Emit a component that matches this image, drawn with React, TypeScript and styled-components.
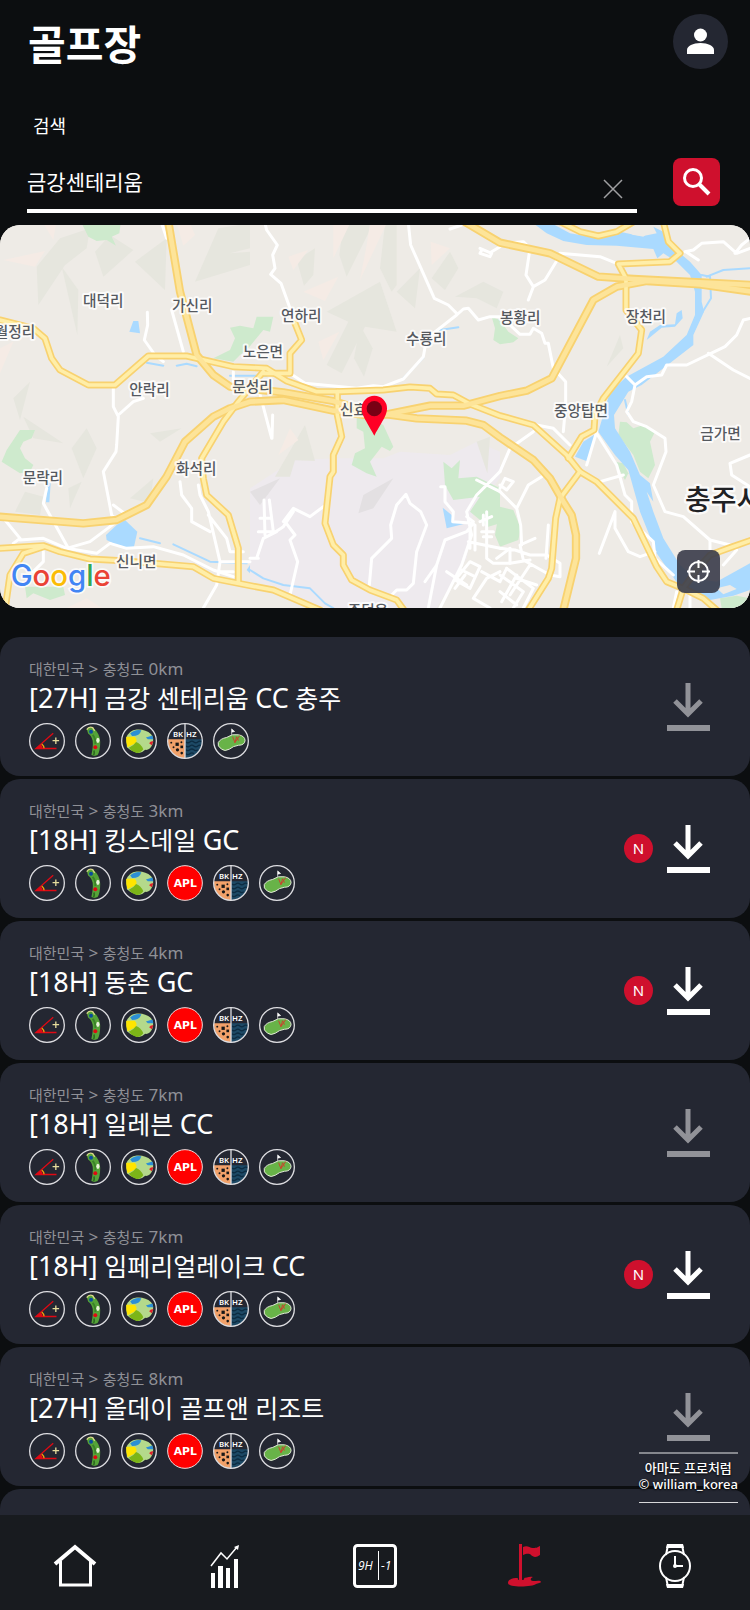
import React from "react";
import styled, { createGlobalStyle } from "styled-components";

const GlobalStyle = createGlobalStyle`
  * { box-sizing: border-box; }
  body {
    margin: 0;
    background: #0c0e10;
    color: #fff;
    font-family: "Noto Sans", "Noto Sans CJK KR", sans-serif;
  }
  button, input { font: inherit; color: inherit; border: 0; background: none; padding: 0; }
  button { cursor: pointer; }
`;

const Screen = styled.div`
  height: 100vh;
  display: flex;
  flex-direction: column;
  position: relative;
  overflow: hidden;
`;

const Header = styled.header`
  display: flex;
  justify-content: space-between;
  align-items: flex-start;
  padding: 14px 22px 0 28px;
  height: 114px;
  flex: none;
`;

const Title = styled.h1`
  margin: 0;
  font-size: 41px;
  line-height: 60px;
  font-weight: 700;
`;

const Avatar = styled.button`
  width: 55px;
  height: 55px;
  border-radius: 50%;
  background: #242732;
  display: grid;
  place-items: center;
`;

const SearchForm = styled.form`
  flex: none;
  padding: 0 30px 12px 27px;
`;

const SearchLabel = styled.label`
  display: block;
  padding-left: 6px;
  font-size: 18px;
  line-height: 24px;
  margin-bottom: 20px;
`;

const SearchRow = styled.div`
  display: flex;
  gap: 36px;
  align-items: flex-start;
`;

const Field = styled.div`
  flex: 1;
  min-width: 0;
  height: 55px;
  border-bottom: 4px solid #fff;
  display: flex;
  align-items: center;
`;

const SearchInput = styled.input`
  flex: 1;
  min-width: 0;
  font-size: 21px;
  line-height: 32px;
  padding-bottom: 3px;
  outline: none;
`;

const ClearButton = styled.button`
  display: flex;
  padding: 10px 14px 0 14px;
`;

const SearchButton = styled.button`
  width: 47px;
  height: 48px;
  border-radius: 8px;
  background: #cf102d;
  display: grid;
  place-items: center;
`;

const MapPanel = styled.section`
  flex: none;
  position: relative;
  height: 383px;
  border-radius: 20px;
  overflow: hidden;
  background: #eeebe6;
  margin-bottom: 29px;
`;

const MapSvg = styled.svg`
  display: block;
  width: 100%;
  height: 100%;
`;

const LocateButton = styled.button`
  position: absolute;
  right: 30px;
  bottom: 15px;
  width: 43px;
  height: 43px;
  border-radius: 8px;
  background: rgba(56, 59, 73, 0.9);
  display: grid;
  place-items: center;
`;

const CourseList = styled.ul`
  list-style: none;
  margin: 0;
  padding: 0;
  flex: 1;
  min-height: 0;
  overflow-y: auto;
  scrollbar-width: none;
  display: flex;
  flex-direction: column;
  gap: 3px;
`;

const Card = styled.li`
  flex: none;
  display: flex;
  align-items: center;
  background: #242732;
  border-radius: 20px;
  padding: 22px 40px 17px 29px;
`;

const CardBody = styled.div`
  flex: 1;
  min-width: 0;
`;

const Region = styled.div`
  font-size: 15px;
  line-height: 20px;
  color: #8f9096;
`;

const RegionLatin = styled.span`
  font-size: 17px;
`;

const CourseName = styled.h2`
  margin: 0 0 6px;
  font-size: 25px;
  line-height: 38px;
  font-weight: 400;
`;

const NameLatin = styled.span`
  font-size: 27px;
`;

const Badges = styled.div`
  display: flex;
  gap: 10px;
`;

const CardActions = styled.div`
  display: flex;
  align-items: center;
  gap: 14px;
  margin-top: -5px;
`;

const NewBadge = styled.span`
  width: 29px;
  height: 29px;
  border-radius: 50%;
  background: #cf102d;
  font-size: 15px;
  line-height: 29px;
  text-align: center;
`;

const DownloadButton = styled.button<{ $done: boolean }>`
  display: flex;
  color: ${(p) => (p.$done ? "#919298" : "#fff")};
`;

const Watermark = styled.div`
  position: absolute;
  right: 12px;
  bottom: 107px;
  border-top: 2px solid #85878d;
  border-bottom: 1px solid #d8d8da;
  padding: 6px 0 10px;
  font-size: 13px;
  line-height: 16px;
  font-weight: 500;
  text-align: center;
  text-shadow: 0 1px 2px #000;
`;

const TabBar = styled.nav`
  flex: none;
  height: 95px;
  background: #181b1f;
  display: grid;
  grid-template-columns: repeat(5, 1fr);
`;

const Tab = styled.a<{ $active?: boolean }>`
  display: grid;
  place-items: center;
  padding-top: 7px;
  color: ${(p) => (p.$active ? "#cf102d" : "#fff")};
`;

/* ---------- Map ---------- */

const mapGreens = [
  "M245,-5H362L358,25 335,35 348,62 320,45 290,48 265,35Z",
  "M690,308 720,302 760,310 770,275 820,275 810,320 790,315 765,345 745,370 720,390 700,410 640,400 690,375 705,340Z",
  "M1475,275 1500,285 1525,320 1555,340 1540,352 1500,358 1480,345 1485,310Z",
  "M60,615 105,615 95,640 70,650 60,670 75,700 100,720 90,740 60,745 5,710 20,675Z",
  "M75,1085 190,1085 195,1110 150,1125 100,1105 80,1120Z",
  "M1070,560 1150,600 1180,665 1170,678 1145,665 1110,710 1130,755 1100,745 1055,720 1065,685 1095,670 1090,620 1070,610Z",
  "M1330,710 1355,730 1380,705 1375,760 1430,755 1500,790 1500,895 1465,905 1410,860 1440,815 1360,825 1335,780Z",
  "M1500,845 1540,855 1562,910 1555,945 1500,965 1485,930Z",
  "M1900,610 1930,600 1965,620 1950,650 1965,720 1945,760 1920,740 1900,690 1855,630 1860,590 1880,592Z",
  "M1845,710 1870,715 1885,745 1875,765Z",
  "M2160,1120 2210,1112 2250,1120V1149H2165Z",
];

const mapTerrain = [
  "M110,125 180,40 270,10 260,70 195,120 115,240Z",
  "M185,125 235,195 232,330Z",
  "M285,80 330,30 400,75 310,155Z",
  "M405,110 500,40 495,195Z",
  "M655,10 750,-5V70L690,85 750,80V120L585,170Z",
  "M890,105 945,70 940,150 912,182Z",
  "M1030,-5H1120L1040,155 1018,90Z",
  "M1155,-5H1190V180L1175,200 1140,130Z",
  "M980,260 1140,170 1190,320 1095,305 1025,445 980,420 1045,290Z",
  "M1080,300 1118,370 1092,455 1062,400Z",
  "M1190,200 1260,130 1245,250Z",
  "M1295,160 1350,80 1375,130 1335,195Z",
  "M1365,215 1450,170 1510,200 1490,250 1430,220Z",
  "M1820,425 1860,330 1870,370Z",
  "M215,670 260,610 290,670 250,760Z",
  "M205,790 245,770 210,850Z",
  "M45,860 75,800 130,815 120,870Z",
  "M70,575 190,655 100,640Z",
  "M450,625 545,610 480,650Z",
  "M390,820 460,760 450,835Z",
  "M825,755 915,600 945,708 885,706 870,755Z",
  "M1430,650 1470,635 1462,745Z",
  "M40,520 90,470 60,585Z",
];

const mapRose = [
  "M10,105 135,78 105,125Z",
  "M130,-5H168L160,45Z",
  "M530,-5H570L585,30 550,62Z",
  "M865,95 925,75 880,135Z",
  "M910,200 1015,155 975,228Z",
  "M1000,-5H1050L1000,100Z",
  "M1110,-5H1160L1080,165 1100,60Z",
  "M1292,50 1350,70 1295,120Z",
  "M955,350 1018,320 970,405Z",
  "M835,690 870,610 895,645Z",
  "M0,370 40,350 0,445Z",
  "M200,1149 260,1120 305,1149Z",
];

const mapWater = [
  "M1655,-5 1710,25 1795,40 1860,20 1930,35 1960,5 1990,20 2010,60 2040,85 2070,110 2105,150 2105,230 2112,260 2080,330 2080,360 1990,430 1925,480 1885,500 1842,570 1845,610 1890,680 1920,750 1950,775 1960,830 1940,800 1960,860 1990,940 2040,1020 2090,1062 2150,1070 2250,1015V1095L2200,1112 2130,1125 2050,1100 1970,985 1920,860 1885,735 1845,690 1795,620 1830,500 1880,455 1990,395 2060,330 2085,270 2085,200 2070,150 2030,110 1990,85 1972,100 1960,72 1850,62 1760,60 1690,48 1640,25 1600,-5Z",
  "M400,288H415L420,325 388,320Z",
  "M318,930 350,900 375,885 412,920 402,965 365,968 320,945Z",
  "M142,770 152,775 148,832 138,832Z",
  "M1328,848 1355,870 1360,888 1400,895 1340,910Z",
  "M1725,695 1750,650 1790,625 1765,710Z",
  "M1980,300 2025,298 2030,265 2045,255 2048,280 2025,305 1985,308 1940,345 1950,320Z",
  "M740,1035 750,1020V1045Z",
];

const mapStreams = [
  "M440,413 490,422M530,422 560,416 590,424",
  "M690,452 800,452",
  "M1210,460 1270,398M1320,315 1375,307",
  "M420,940 480,955M520,958 630,1010 740,1015",
  "M750,1035 790,1060 850,1080 930,1090 975,1135 1000,1149",
  "M2105,150 2130,155 2133,220 2108,260",
  "M2120,155 2170,135 2250,130",
  "M1875,525 1885,570",
];

const mapStreets = [
  "M485,-5 500,40M442,262 443,300 433,345 465,390 490,410M515,255 550,380M340,490 340,545 355,575 350,660 348,680 310,740 335,870 355,890M355,570 400,530 430,520",
  "M795,-5 800,15 832,60 818,90 825,130 812,148 843,175 870,250M700,440V470M770,470 815,640M818,570 816,640M870,445 915,475 1070,490 1120,482 1150,485 1210,462 1270,395 1280,340 1370,270 1390,252 1405,250 1435,285 1470,275 1500,275",
  "M1225,-5 1232,60 1303,220 1345,240 1370,265M1350,12 1385,0M1440,70 1475,85 1470,95 1440,85 1445,75M1475,80 1500,65",
  "M1510,55 1570,50 1590,70 1578,150 1600,185 1585,225M1600,185 1635,165 1675,100M1680,85 1800,95 1850,115M1530,300 1560,328 1590,328 1600,310 1625,325 1635,355 1645,355 1660,430 1697,470V540L1690,620",
  "M2055,80 2080,75 2105,55 2170,50 2210,85 2250,70M2205,85 2225,60 2250,40M2060,82 2095,105M2250,280 2230,285 2210,330 2175,365 2060,420 2000,420 1985,450 1940,455 1905,480 1895,530 1880,560 1900,590 1940,605 1995,640 1998,680 1960,780 1995,860 2050,875 2130,945 2190,960M1880,455 1905,480M2125,385 2200,435 2250,460",
  "M2250,690 2190,715 2195,750 2250,785M2130,945V990M2170,1020 2210,975",
  "M140,790 130,835 205,970M15,885 60,940 40,955M60,945 130,940 200,970 270,950 350,890M200,970 290,985 330,955 380,970 460,965 550,990 640,1035 700,1055M340,840 380,870",
  "M540,770 545,810 575,850 575,890 630,920M595,780 600,810 625,860 660,1010 650,1080 610,1149M625,870 680,940 690,980 730,980M660,1010H750M660,1040H700M130,980V1010L100,1040",
  "M792,825 795,930M808,825 820,920M780,880H810M775,920H830L790,940 770,1000M820,925 850,905 880,860M850,890 880,850 930,875 970,845M855,890 885,930 870,945 893,1010 870,1110M750,1000H775",
  "M1108,1080 1115,1000 1175,940 1172,900 1190,840 1218,808 1230,835 1262,860 1280,900 1250,980 1240,1075 1220,1095 1190,1095 1165,1120",
  "M1322,785H1335V830L1360,860 1358,890 1420,895 1400,920 1335,945 1310,1020 1285,1149M1430,765 1500,800M1500,740 1430,810 1400,860 1415,930 1405,960 1385,1020 1320,1149M1405,950 1500,970M1410,905V970M1425,900V975M1400,875 1420,890M1310,1020 1275,1070",
  "M1450,870V900M1460,860V1000L1480,1015 1530,1015M1440,890 1475,875M1445,920H1480M1450,935H1475M1410,1010 1440,1025 1410,1090 1365,1065ZM1385,1035 1425,1055M1395,1050 1365,1090M1445,1040 1500,1070 1520,1030M1500,1040 1460,1060 1420,1120 1470,1149M1340,1040 1400,1080M1490,1000 1530,970",
  "M1500,970 1545,975 1590,990 1640,990 1680,1015V1055L1650,1050 1570,1005 1560,960 1605,940M1530,970V1015L1590,1005M1500,1050 1570,1100 1540,1149M1520,1030 1600,1090 1570,1149M1500,1100 1550,1140M1550,1050 1505,1130M1590,1020 1530,1110M1550,1060 1610,1080",
  "M1500,740 1530,670 1600,620M1500,790 1515,760 1540,770 1520,795 1500,780M1500,800 1550,850 1585,780 1625,755M1550,850 1562,900 1565,960M1645,900 1638,1000M1610,600 1660,610 1710,660",
  "M1790,620 1760,720M1790,625 1850,720 1875,810 1895,830V870M1800,770 1870,750M1845,860 1798,985M1845,860V910L1885,980 1920,995 1965,980M1895,890 1960,950 1965,1000 2020,1050",
  "M2020,1149 2030,1100M2070,1149V1110",
];

const minorRoads = [
  "M0,285 100,310 135,340 155,400 180,435 265,480H345L445,393H560L700,425 800,430 860,468 950,500H1010L1150,495 1230,486 1290,490 1310,507 1360,510 1410,537 1500,572 1600,600 1700,690 1740,740 1790,770 1900,880 1970,1025 2000,1070 2060,1095 2110,1120 2150,1155",
  "M885,295 905,345 870,385V445H790",
  "M790,440 715,530 670,590 605,700 610,760 620,810 685,870 715,970V1070",
  "M0,970 130,962 180,980 270,1002 380,1008 580,1025 640,1060 750,1082 820,1095 960,1155",
  "M15,1155 30,1050 70,985 130,965",
  "M1012,500V570L1025,635 1000,690V740L990,755 975,895 1000,960 1030,990V1020L1055,1065 1110,1095 1190,1125 1212,1155",
  "M1990,-10 2005,50 2040,85 2010,110 1855,117 1878,160V255L1925,315 1915,385 1810,520 1785,570 1782,615 1745,635 1705,700",
  "M1740,740 1680,820 1667,880 1655,1030 1645,1060 1585,1155",
  "M2255,945 2190,968 2130,990 2090,1035 2050,1090 2030,1155",
  "M1670,-15 1740,20 1795,33 1850,20 1910,-15",
];

const majorRoads = [
  "M505,-10 540,200 590,390 640,450 690,485 850,502 1000,528 1100,560 1250,580 1400,587 1450,600 1500,637 1600,705 1650,760 1690,830 1715,870 1728,930V1000L1690,1155",
  "M-5,875 250,895 350,885 440,840 500,755 555,650 640,575 690,550 750,530 850,525 1000,557 1130,575",
  "M1150,570 1290,542H1390L1500,513 1580,497 1655,460 1780,225 1850,185 1940,168 2100,178 2255,200",
  "M1385,-15 1500,53 1650,85 1795,155 1900,162 2255,180",
];

const mapLabels: [string, number, number][] = [
  ["대덕리", 249, 243],
  ["가신리", 516, 258],
  ["월정리", -16, 335],
  ["안락리", 388, 511],
  ["노은면", 728, 395],
  ["문성리", 697, 502],
  ["연하리", 843, 289],
  ["수룡리", 1218, 358],
  ["신효리", 1020, 570],
  ["봉황리", 1500, 293],
  ["장천리", 1877, 291],
  ["중앙탑면", 1662, 573],
  ["금가면", 2101, 641],
  ["문락리", 68, 775],
  ["화석리", 528, 747],
  ["신니면", 348, 1027],
  ["주덕읍", 1043, 1173],
];

const CourseMap = () => (
  <MapSvg viewBox="0 0 2250 1149" preserveAspectRatio="xMidYMid slice" role="img" aria-label="지도">
    <rect width="2250" height="1149" fill="#eeebe6" />
    <path
      d="M750,790 880,705 1010,700 1150,700 1200,680 1350,690 1430,650 1500,680V760L1420,860 1400,1000 1310,1149H960L750,1060Z"
      fill="#eeeaee"
    />
    <path d="M750,800 840,760 780,840ZM1075,865 1090,810 1180,760 1120,850Z" fill="#e3e0e2" />
    {mapTerrain.map((d) => <path key={d} d={d} fill="#e6e6de" />)}
    {mapRose.map((d) => <path key={d} d={d} fill="#f5ebe5" />)}
    {mapGreens.map((d) => <path key={d} d={d} fill="#ceeacd" />)}
    {mapWater.map((d) => <path key={d} d={d} fill="#aadaff" />)}
    <path d="M1880,20 1960,5 1970,25 1930,33 1900,30ZM2150,1090 2190,1080 2210,1092 2170,1108Z" fill="#eeebe6" />
    <g fill="none" strokeLinejoin="round" strokeLinecap="round">
      {mapStreams.map((d) => <path key={d} d={d} stroke="#aadaff" strokeWidth="6" />)}
      {mapStreets.map((d) => <path key={d} d={d} stroke="#fff" strokeWidth="9" />)}
      <g stroke="#f8d270">
        {minorRoads.map((d) => <path key={d} d={d} strokeWidth="21" />)}
        {majorRoads.map((d) => <path key={d} d={d} strokeWidth="25" />)}
      </g>
      {minorRoads.map((d) => <path key={d} d={d} stroke="#ffeea8" strokeWidth="11" />)}
      {majorRoads.map((d) => <path key={d} d={d} stroke="#fde499" strokeWidth="14" />)}
    </g>
    <g
      fontFamily='"Noto Sans CJK KR", sans-serif'
      stroke="#fff"
      strokeOpacity="0.8"
      strokeLinejoin="round"
      paintOrder="stroke"
    >
      <g fontSize="44" fontWeight="500" fill="#55595f" strokeWidth="12">
        {mapLabels.map(([name, x, y]) => <text key={name} x={x} y={y}>{name}</text>)}
      </g>
      <text x="2055" y="856" fontSize="84" fontWeight="500" fill="#202124" strokeWidth="14">충주시</text>
    </g>
    <path d="M1123,512a38,38 0 0 1 38,38c0,20 -10,32 -38,82c-28,-50 -38,-62 -38,-82a38,38 0 0 1 38,-38Z" fill="#ff0025" />
    <circle cx="1123" cy="551" r="23" fill="#780014" />
    <text x="32" y="1083" fontFamily="Inter, sans-serif" fontSize="88" fontWeight="500" stroke="#fff" strokeWidth="10" strokeOpacity="0.8" paintOrder="stroke">
      <tspan fill="#4285f4">G</tspan><tspan fill="#ea4335">o</tspan><tspan fill="#fbbc05">o</tspan><tspan fill="#4285f4">g</tspan><tspan fill="#34a853">l</tspan><tspan fill="#ea4335">e</tspan>
    </text>
  </MapSvg>
);

/* ---------- Feature icons of a course ---------- */

type Feature = "slope" | "hole" | "terrain" | "apl" | "hazard" | "green";

const ring = <circle cx="55" cy="55" r="53" fill="none" stroke="#dcdce0" strokeWidth="4" />;

const featureArt: Record<Feature, React.ReactNode> = {
  slope: (
    <>
      <path d="M74,31 21,78H84" fill="none" stroke="#e00914" strokeWidth="4" />
      <path d="M21,78 36,66Q42,71 42,78Z" fill="#e00914" />
      <path d="M39,64Q46,70 46,77" fill="none" stroke="#f5a30a" strokeWidth="4" />
      <path d="M82,44V64M72,54H92" stroke="#e6dd9c" strokeWidth="4" />
      {ring}
    </>
  ),
  hole: (
    <>
      <path d="M36,18Q42,10 54,14Q77,32 77,58Q77,86 69,98Q60,103 50,98Q56,72 54,54Q50,38 40,32Z" fill="#55a338" />
      <path d="M54,36Q64,48 62,64" fill="none" stroke="#3a8228" strokeWidth="6" />
      <path d="M58,84Q60,92 57,98" fill="none" stroke="#2c6a20" strokeWidth="5" />
      <path d="M36,20Q42,10 54,14L60,24" fill="none" stroke="#d9d68a" strokeWidth="4" />
      <circle cx="49" cy="27" r="6" fill="#0a4a9c" />
      <ellipse cx="70" cy="53" rx="5" ry="8" fill="#e9f2d8" />
      <circle cx="62" cy="74" r="6" fill="#e00914" />
      {ring}
    </>
  ),
  terrain: (
    <>
      <path d="M16,46Q24,22 48,20Q74,18 92,34Q102,46 96,66Q88,84 74,82Q58,98 42,88Q28,84 18,74Z" fill="#b4d98b" />
      <path d="M28,32Q42,18 62,22Q58,40 34,40Z" fill="#2c8fd6" />
      <path d="M16,42 42,42Q52,52 44,62L20,74Q14,58 16,42Z" fill="#ffe500" />
      <path d="M24,76Q38,70 46,58Q60,62 68,80Q56,96 44,90Q32,88 24,76Z" fill="#7cb518" />
      <path d="M76,44 96,38 99,50 82,50Z" fill="#2c8fd6" />
      <path d="M86,62Q90,54 99,56L94,68Z" fill="#e0202a" />
      {ring}
    </>
  ),
  apl: (
    <>
      <circle cx="55" cy="55" r="53" fill="#f00" stroke="#f0dede" strokeWidth="3" />
      <text x="56" y="66" fontFamily='"DejaVu Sans", sans-serif' fontSize="33" fontWeight="700" fill="#fff" textAnchor="middle">APL</text>
    </>
  ),
  hazard: (
    <>
      <path d="M3,50H55V108A53,53 0 0 1 3,50Z" fill="#f2a169" />
      <path d="M55,50H107A53,53 0 0 1 55,108Z" fill="#1d4965" />
      <path d="M58,58q6,5 12,0t12,0t12,0t12,0M58,70q6,5 12,0t12,0t12,0t12,0M58,82q6,5 12,0t12,0t12,0M58,94q6,5 12,0t12,0" fill="none" stroke="#0d2c42" strokeWidth="4" />
      <g fill="#171717">
        <rect x="26" y="60" width="10" height="10" />
        <rect x="41" y="69" width="8" height="8" />
        <circle cx="20" cy="74" r="3" />
        <circle cx="32" cy="82" r="5" />
        <circle cx="45" cy="92" r="4" />
        <circle cx="44" cy="59" r="3" />
        <circle cx="13" cy="60" r="3" />
      </g>
      <path d="M55,2V108" stroke="#dcdce0" strokeWidth="4" />
      <g fontFamily='"Noto Sans", sans-serif' fontSize="24" fontWeight="600" fill="#fff">
        <text x="18" y="43">BK</text>
        <text x="58" y="43">HZ</text>
      </g>
      {ring}
    </>
  ),
  green: (
    <>
      <path d="M16,60Q22,48 42,44Q58,32 78,36Q98,40 98,54Q96,68 78,68Q62,70 50,80Q36,88 26,80Q12,70 16,60Z" fill="#68b348" stroke="#e3ead9" strokeWidth="3" />
      <path d="M57,36V18M57,18 66,26 57,28" fill="#fff" stroke="#fff" strokeWidth="2" />
      <path d="M60,42 67,60 72,42 78,54M67,60 82,38" fill="none" stroke="#c8452e" strokeWidth="3" />
      {ring}
    </>
  ),
};

const FeatureIcon = ({ feature }: { feature: Feature }) => (
  <svg width="36" height="36" viewBox="0 0 110 110" aria-hidden="true">{featureArt[feature]}</svg>
);

const DownloadIcon = () => (
  <svg width="43" height="48" viewBox="0 0 43 48" aria-hidden="true">
    <path d="M21 0v31M8 18l13 13 13-13" fill="none" stroke="currentColor" strokeWidth="5" />
    <path d="M0 42h43v6H0z" fill="currentColor" />
  </svg>
);

/* ---------- Data ---------- */

interface Course {
  holes: string;
  name: string;
  distance: string;
  isNew: boolean;
  features: Feature[];
}

const allFeatures: Feature[] = ["slope", "hole", "terrain", "apl", "hazard", "green"];

const courses: Course[] = [
  { holes: "27H", name: "금강 센테리움 CC 충주", distance: "0km", isNew: false, features: allFeatures.filter((f) => f !== "apl") },
  { holes: "18H", name: "킹스데일 GC", distance: "3km", isNew: true, features: allFeatures },
  { holes: "18H", name: "동촌 GC", distance: "4km", isNew: true, features: allFeatures },
  { holes: "18H", name: "일레븐 CC", distance: "7km", isNew: false, features: allFeatures },
  { holes: "18H", name: "임페리얼레이크 CC", distance: "7km", isNew: true, features: allFeatures },
  { holes: "27H", name: "올데이 골프앤 리조트", distance: "8km", isNew: false, features: allFeatures },
];

/* Latin capitals and brackets are set a little larger than the Hangul around them. */
const MixedName = ({ text }: { text: string }) => (
  <>
    {text.split(/(\[\w+\]|[A-Z]+)/).map((part, i) =>
      i % 2 ? <NameLatin key={i}>{part}</NameLatin> : part
    )}
  </>
);

const CourseCard = ({ course }: { course: Course }) => (
  <Card>
    <CardBody>
      <Region>
        대한민국<RegionLatin> &gt; </RegionLatin>충청도<RegionLatin> {course.distance}</RegionLatin>
      </Region>
      <CourseName><MixedName text={`[${course.holes}] ${course.name}`} /></CourseName>
      <Badges>
        {course.features.map((f) => <FeatureIcon key={f} feature={f} />)}
      </Badges>
    </CardBody>
    <CardActions>
      {course.isNew && <NewBadge>N</NewBadge>}
      <DownloadButton $done={!course.isNew} aria-label={`${course.name} 다운로드`}>
        <DownloadIcon />
      </DownloadButton>
    </CardActions>
  </Card>
);

const PeekCard = styled(Card)`
  height: 139px;
`;

/* ---------- Tab icons ---------- */

const HomeIcon = () => (
  <svg width="44" height="44" viewBox="0 0 44 44" fill="none" stroke="currentColor" strokeWidth="3" aria-hidden="true">
    <path d="M2 20 22 3 42 20" strokeWidth="4" />
    <path d="M7.500 17V41H37.500V17" />
  </svg>
);

const StatsIcon = () => (
  <svg width="44" height="44" viewBox="0 0 44 44" aria-hidden="true">
    <path d="M8 29h4v15H8zM15 22h5v22h-5zM23 24h4v20h-4zM31 15h4v29h-4z" fill="currentColor" />
    <path d="M8 22 18 9l6 6L34 3" fill="none" stroke="currentColor" strokeWidth="1.500" />
    <path d="M36 1l-1 5-4-3z" fill="currentColor" />
  </svg>
);

const ScoreIcon = () => (
  <svg width="44" height="44" viewBox="0 0 44 44" aria-hidden="true">
    <rect x="1.500" y="1.500" width="41" height="41" rx="3" fill="none" stroke="currentColor" strokeWidth="3" />
    <path d="M25.500 7v29" stroke="currentColor" strokeWidth="1" />
    <g fontFamily='"Open Sans", sans-serif' fontSize="12" fontStyle="italic" fill="currentColor">
      <text x="5" y="26">9H</text>
      <text x="28" y="26">-1</text>
    </g>
  </svg>
);

const FlagIcon = () => (
  <svg width="44" height="44" viewBox="0 0 44 44" fill="currentColor" aria-hidden="true">
    <path d="M16 0h3v37h-3z" />
    <path d="M20 3c5-2 6 1 10 1s5-1 7-2v9c-4 3-7 2-9 0s-5-1-8 0z" />
    <path d="M15 34c-7 0-10 2-10 5 0 5 25 4 28 1 2-1 5-1 5-2 0-2-5-1-8-1s-3-3 0-4c-4-1-7 1-9 1 2 3-8 3-6 0z" />
  </svg>
);

const WatchIcon = () => (
  <svg width="44" height="44" viewBox="0 0 44 44" fill="none" stroke="currentColor" strokeWidth="2" aria-hidden="true">
    <circle cx="22" cy="22" r="15" />
    <path d="M13 11l2-10h14l2 10M13 33l2 10h14l2-10" />
    <path d="M14 0h16l1 4H13zM14 44h16l1-4H13z" fill="currentColor" stroke="none" />
    <path d="M22 12v10h8" />
    <circle cx="22" cy="22" r="1" fill="currentColor" />
  </svg>
);

export default function App() {
  return (
    <Screen>
      <GlobalStyle />
      <Header>
        <Title>골프장</Title>
        <Avatar aria-label="프로필">
          <svg width="27" height="27" viewBox="0 0 27 27" fill="#fff" aria-hidden="true">
            <circle cx="13.500" cy="7" r="6.500" />
            <path d="M0 26v-4c0-4 6-7 13.500-7S27 18 27 22v4z" />
          </svg>
        </Avatar>
      </Header>
      <SearchForm onSubmit={(e) => e.preventDefault()}>
        <SearchLabel htmlFor="course-search">검색</SearchLabel>
        <SearchRow>
          <Field>
            <SearchInput id="course-search" type="text" defaultValue="금강센테리움" />
            <ClearButton type="reset" aria-label="지우기">
              <svg width="20" height="20" viewBox="0 0 20 20" stroke="#a0a0a2" strokeWidth="1.500" aria-hidden="true">
                <path d="M1 1l18 18M19 1 1 19" />
              </svg>
            </ClearButton>
          </Field>
          <SearchButton type="submit" aria-label="검색">
            <svg width="28" height="28" viewBox="0 0 28 28" fill="none" stroke="#fff" aria-hidden="true">
              <circle cx="10" cy="10" r="8.500" strokeWidth="3" />
              <path d="M16 16l10 10" strokeWidth="4" />
            </svg>
          </SearchButton>
        </SearchRow>
      </SearchForm>
      <MapPanel>
        <CourseMap />
        <LocateButton aria-label="현재 위치">
          <svg width="25" height="25" viewBox="0 0 25 25" fill="none" stroke="#fff" strokeWidth="2" aria-hidden="true">
            <circle cx="12.500" cy="12.500" r="9.500" />
            <path d="M12.500 1v8M12.500 16v8M1 12.500h8M16 12.500h8" />
          </svg>
        </LocateButton>
      </MapPanel>
      <CourseList>
        {courses.map((c) => <CourseCard key={c.name} course={c} />)}
        <PeekCard aria-hidden="true" />
      </CourseList>
      <Watermark>아마도 프로처럼<br />© william_korea</Watermark>
      <TabBar>
        <Tab href="#home" aria-label="홈"><HomeIcon /></Tab>
        <Tab href="#stats" aria-label="통계"><StatsIcon /></Tab>
        <Tab href="#score" aria-label="스코어"><ScoreIcon /></Tab>
        <Tab href="#courses" aria-label="골프장" $active><FlagIcon /></Tab>
        <Tab href="#watch" aria-label="시계"><WatchIcon /></Tab>
      </TabBar>
    </Screen>
  );
}
